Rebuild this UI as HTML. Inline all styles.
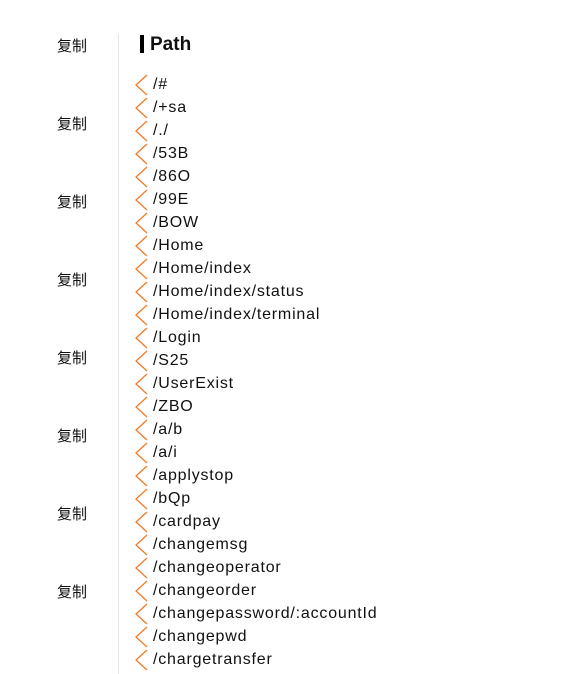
<!DOCTYPE html>
<html><head><meta charset="utf-8"><style>
html,body{margin:0;padding:0;background:#fff;width:574px;height:665px;overflow:hidden;font-family:"Liberation Sans","Noto Sans CJK SC",sans-serif;color:#111}
.cp{position:absolute;left:57px;font-size:15px;line-height:20px}
.div{position:absolute;left:118px;top:34px;width:1px;height:640px;background:#e4e4e4}
.bar{position:absolute;left:140px;top:35px;width:4px;height:18px;background:#000}
.hd{position:absolute;left:150px;top:33px;font-size:19px;font-weight:bold;line-height:24px}
.it{position:absolute;left:134px;height:23px;font-size:16px;line-height:23px;white-space:nowrap;letter-spacing:0.8px}
.it svg{position:absolute;left:0;top:1px}
.it span{position:absolute;left:19px;top:0}
</style></head><body>
<div class="div"></div>
<div class="bar"></div><div class="hd">Path</div>
<div class="cp" style="top:37px">复制</div>
<div class="cp" style="top:115px">复制</div>
<div class="cp" style="top:193px">复制</div>
<div class="cp" style="top:271px">复制</div>
<div class="cp" style="top:349px">复制</div>
<div class="cp" style="top:427px">复制</div>
<div class="cp" style="top:505px">复制</div>
<div class="cp" style="top:583px">复制</div>
<div id="list"></div>
<script>
var items=["/#","/+sa","/./","/53B","/86O","/99E","/BOW","/Home","/Home/index","/Home/index/status","/Home/index/terminal","/Login","/S25","/UserExist","/ZBO","/a/b","/a/i","/applystop","/bQp","/cardpay","/changemsg","/changeoperator","/changeorder","/changepassword/:accountId","/changepwd","/chargetransfer"];
var h="";
for(var i=0;i<items.length;i++){
h+='<div class="it" style="top:'+(73+i*23)+'px"><svg width="16" height="22" viewBox="0 0 16 22"><polyline points="13,1 2,11 13,21" fill="none" stroke="#f07a2a" stroke-width="1.3"/></svg><span>'+items[i].replace(/&/g,"&amp;").replace(/</g,"&lt;")+'</span></div>';
}
document.getElementById("list").innerHTML=h;
</script>
</body></html>
